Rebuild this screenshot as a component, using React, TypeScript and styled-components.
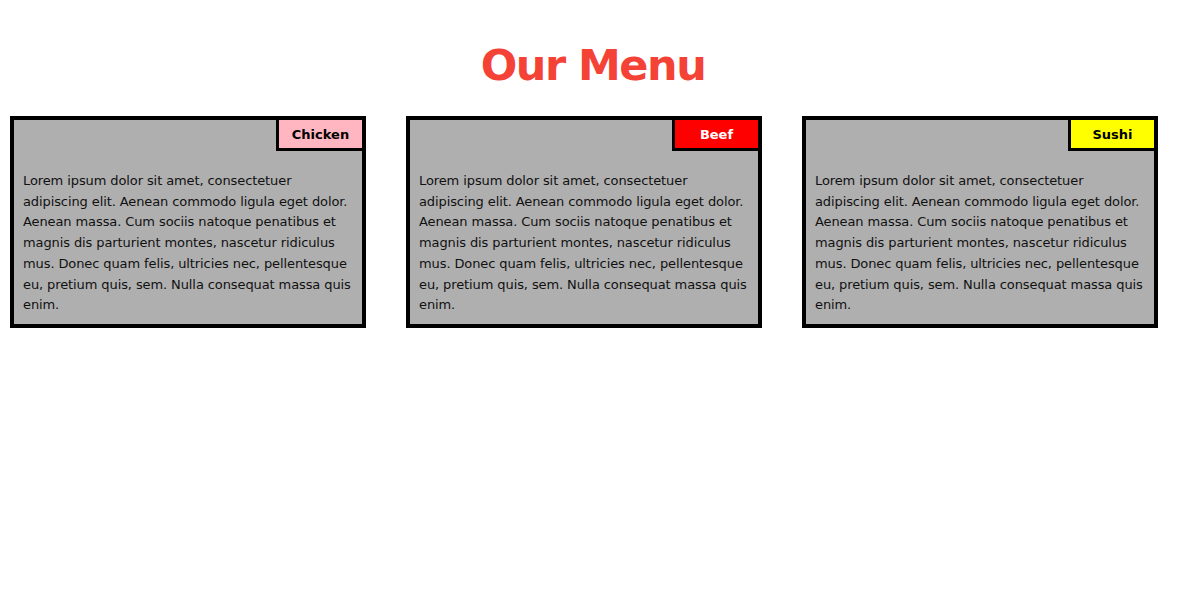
import React from 'react';
import styled, { createGlobalStyle } from 'styled-components';

interface Dish {
  name: string;
  bg: string;
  color: string;
}

const dishes: Dish[] = [
  { name: 'Chicken', bg: '#ffb6c1', color: '#000' },
  { name: 'Beef', bg: '#ff0000', color: '#fff' },
  { name: 'Sushi', bg: '#ffff00', color: '#000' },
];

const lorem =
  'Lorem ipsum dolor sit amet, consectetuer adipiscing elit. Aenean commodo ligula eget dolor. Aenean massa. Cum sociis natoque penatibus et magnis dis parturient montes, nascetur ridiculus mus. Donec quam felis, ultricies nec, pellentesque eu, pretium quis, sem. Nulla consequat massa quis enim.';

const App: React.FC = () => {
  return (
    <>
      <GlobalStyle />
      <Page>
        <Title>Our Menu</Title>
        <Cards>
          {dishes.map((dish) => (
            <Card key={dish.name}>
              <CardHead>
                <Tag $bg={dish.bg} $color={dish.color}>
                  {dish.name}
                </Tag>
              </CardHead>
              <Text>{lorem}</Text>
            </Card>
          ))}
        </Cards>
      </Page>
    </>
  );
};

export default App;

const GlobalStyle = createGlobalStyle`
  body {
    margin: 0;
    background: #fff;
    font-family: 'Comic Sans MS', 'DejaVu Sans', sans-serif;
  }
`;

const Page = styled.div`
  display: flex;
  flex-direction: column;
  width: 1186px;
  min-height: 591px;
`;

const Title = styled.h1`
  margin: 36px 0 22px;
  text-align: center;
  font-size: 43px;
  line-height: 58px;
  letter-spacing: -1.5px;
  font-weight: bold;
  color: #f44336;
`;

const Cards = styled.div`
  display: flex;
  gap: 40px;
  padding-left: 10px;
`;

const Card = styled.div`
  display: flex;
  flex-direction: column;
  box-sizing: border-box;
  width: 356px;
  height: 212px;
  border: 4px solid #000;
  background: #afafaf;
`;

const CardHead = styled.div`
  display: flex;
  justify-content: flex-end;
`;

const Tag = styled.span<{ $bg: string; $color: string }>`
  display: flex;
  align-items: center;
  justify-content: center;
  box-sizing: border-box;
  width: 86px;
  height: 31px;
  border-left: 3px solid #000;
  border-bottom: 3px solid #000;
  background: ${(props) => props.$bg};
  color: ${(props) => props.$color};
  font-size: 13px;
  font-weight: bold;
`;

const Text = styled.p`
  margin: 20px 0 0;
  padding: 0 4px 0 9px;
  font-size: 13px;
  line-height: 20.7px;
  letter-spacing: -0.1px;
  color: #111;
`;
